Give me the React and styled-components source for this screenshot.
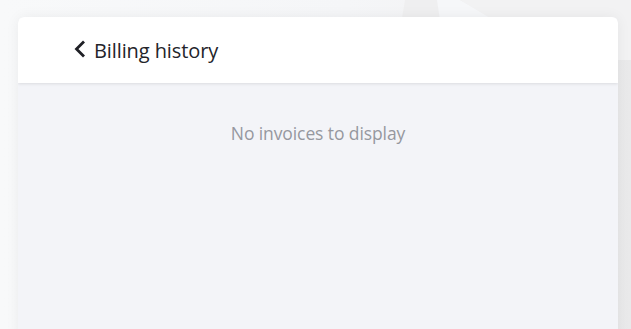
import React from "react";
import styled, { createGlobalStyle } from "styled-components";

const Global = createGlobalStyle`
  html, body { margin: 0; padding: 0; }
  body {
    font-family: "Open Sans", "Noto Sans", sans-serif;
    background: #f3f3f4;
  }
`;

const Page = styled.div`
  position: relative;
  width: 631px;
  height: 329px;
  overflow: hidden;
  background: linear-gradient(90deg, #f8f9fa 0%, #f5f6f8 55%, #f2f2f3 80%, #e9e9ea 100%);
  padding: 17px 13px 0 18px;
  box-sizing: border-box;
`;

const Shape = styled.div`
  position: absolute;
  top: 0;
  left: 0;
  width: 631px;
  height: 60px;
  background: ${(p) => p.$color};
  clip-path: ${(p) => p.$clip};
  pointer-events: none;
`;

const Card = styled.div`
  position: relative;
  width: 600px;
  height: 340px;
  background: #f3f4f8;
  border-radius: 6px 6px 0 0;
  box-shadow: 0 0 14px rgba(0, 0, 0, 0.06);
  display: flex;
  flex-direction: column;
  overflow: hidden;
`;

const Header = styled.div`
  height: 66px;
  background: #ffffff;
  display: flex;
  align-items: center;
  padding: 0 0 0 55px;
  gap: 7px;
  box-shadow: 0 1px 3px rgba(0, 0, 0, 0.1);
  position: relative;
  z-index: 1;
`;

const Back = styled.svg`
  width: 14px;
  height: 18px;
  flex: none;
  margin-top: -2px;
`;

const Title = styled.h1`
  margin: 0;
  font-size: 20px;
  font-weight: 400;
  color: #23242a;
  letter-spacing: -0.1px;
`;

const Body = styled.div`
  flex: 1;
  display: flex;
  justify-content: center;
  padding-top: 38px;
`;

const Empty = styled.p`
  margin: 0;
  font-size: 17.5px;
  color: #96989f;
  letter-spacing: -0.1px;
`;

export default function App() {
  return (
    <>
      <Global />
      <Page>
        <Shape $color="#efeff0" $clip="polygon(405px 0, 480px 0, 437px 60px, 395px 60px)" />
        <Shape $color="#f6f7f9" $clip="polygon(437px 0, 460px 0, 495px 20px, 440px 20px)" />
        <Shape $color="#f2f2f3" $clip="polygon(460px 0, 631px 0, 631px 60px, 560px 60px)" />
        <Card>
          <Header>
            <Back viewBox="0 0 14 18" aria-label="Back">
              <path d="M11 1.5 L3.5 9 L11 16.5" fill="none" stroke="#1f2026" strokeWidth="2.8" />
            </Back>
            <Title>Billing history</Title>
          </Header>
          <Body>
            <Empty>No invoices to display</Empty>
          </Body>
        </Card>
      </Page>
    </>
  );
}
